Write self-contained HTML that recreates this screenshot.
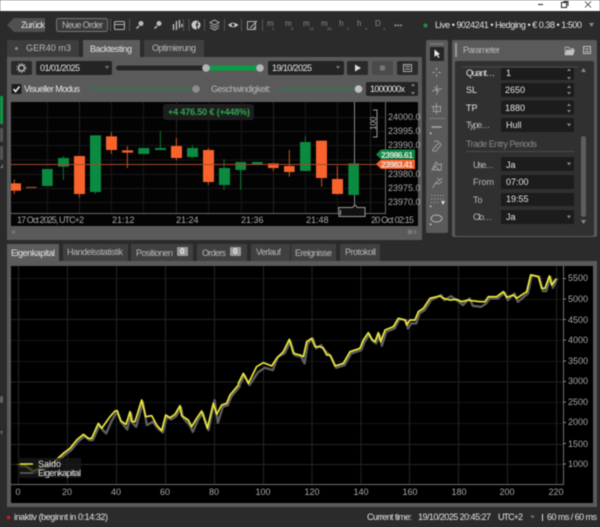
<!DOCTYPE html>
<html><head><meta charset="utf-8"><style>
html,body{margin:0;padding:0;background:#2b2b2b;width:600px;height:527px;overflow:hidden}
svg{display:block;filter:blur(.45px)}
text{font-family:"Liberation Sans",sans-serif;font-size:9px;fill:#c8c8c8}
.s{fill:#b8b8b8}.d{fill:#8a8a8a}.w{fill:#e4e4e4}
.ax{font-size:9px;fill:#a8a8a8}
.sub{font-size:4px;fill:#888}
.ic{fill:none;stroke:#b0b0b0;stroke-width:1}
.tb{fill:none;stroke:#9c9c9c;stroke-width:1}
</style></head><body>
<svg width="600" height="527" viewBox="0 0 600 527" xmlns="http://www.w3.org/2000/svg">
<rect width="600" height="527" fill="#2b2b2b"/>
<rect width="600" height="11" fill="#fff"/>
<path d="M538 4.500h5" stroke="#222" stroke-width="1"/>
<rect x="561.500" y="2.500" width="5" height="5" fill="none" stroke="#222"/><path d="M563.500 1.500h4.500v4.500" fill="none" stroke="#222"/>
<path d="M585 1.500l6 6M591 1.500l-6 6" stroke="#333" stroke-width=".8"/>

<!-- top toolbar -->
<polygon points="7,25 14,18 45,18 45,32 14,32" fill="#505050"/>
<text x="21" y="28" class="w" textLength="24">Zurück</text>
<rect x="56.500" y="18.500" width="51" height="13" rx="2" fill="#3a3a3a" stroke="#777"/>
<text x="62" y="28" class="s" textLength="41">Neue Order</text>
<g stroke="#555"><path d="M110.500 19v12M129.500 19v12M183.500 19v12M189 19v12M204.500 19v12M224.500 19v12M241.500 19v12M262.500 19v12"/></g>
<rect x="114.500" y="21.500" width="10" height="8" rx="1" class="ic"/><path d="M115 24.500h9" class="ic"/>
<circle cx="141" cy="23.500" r="2.500" fill="#bbb"/><path d="M139 26l-2.500 2.500" stroke="#bbb" stroke-width="1.500"/>
<circle cx="159" cy="23.500" r="2.500" fill="#bbb"/><path d="M157 26l-2.500 2.500" stroke="#bbb" stroke-width="1.500"/>
<path d="M173.500 24v6M176.500 21v9M179.500 20v8M182 24v3" stroke="#b5b5b5" stroke-width="1.500"/>
<circle cx="196" cy="25" r="4.500" fill="#c8c8c8"/><path d="M197 30v-5.500h1.500M195.500 25h3M196.800 24.500v-1.200q0-1 1.500-1" stroke="#2b2b2b" fill="none" stroke-width="1"/>
<path d="M210 22.500l4.500-2.500 4.500 2.500-4.500 2.500zM210 25l4.500 2.500 4.500-2.500M210 27.500l4.500 2.500 4.500-2.500" class="ic"/>
<path d="M228 25q5-4.500 10.500 0q-5.500 4.500-10.500 0z" fill="#c8c8c8"/><circle cx="233" cy="25" r="1.500" fill="#2b2b2b"/>
<rect x="247.500" y="21.500" width="8" height="8" class="ic"/><path d="M250 28l7-7M253 29l3-3" class="ic"/>
<text x="267" y="26" style="font-size:8px" class="d">m</text><text x="272" y="30" class="sub">1</text>
<text x="285" y="26" style="font-size:8px" class="d">m</text><text x="291" y="30" class="sub">5</text>
<text x="303" y="26" style="font-size:8px" class="d">m</text><text x="309" y="30" class="sub">15</text>
<text x="321" y="26" style="font-size:8px" class="d">m</text><text x="327" y="30" class="sub">30</text>
<text x="339" y="26" style="font-size:8px" class="d">h</text><text x="347" y="30" class="sub">1</text>
<text x="357" y="26" style="font-size:8px" class="d">h</text><text x="365" y="30" class="sub">4</text>
<text x="375" y="26" style="font-size:8px" class="d">D</text><text x="383" y="30" class="sub">1</text>
<text x="394" y="28" style="font-size:8px" class="d">•••</text>
<circle cx="425.500" cy="25.500" r="2" fill="#1e8f3e"/>
<text x="435" y="28" class="w" textLength="147">Live • 9024241 • Hedging • € 0.38 • 1:500</text>
<path d="M589 23h5l-2.500 4z" fill="#888"/>

<!-- backtest tabs -->
<rect x="7" y="40" width="72" height="18" fill="#3d3d3d"/>
<rect x="83" y="40" width="57" height="18" fill="#5c5c5c"/>
<rect x="144" y="40" width="60" height="18" fill="#404040"/>
<circle cx="16.500" cy="48.500" r="1.500" fill="#888"/>
<text x="26" y="51" class="s" textLength="45">GER40  m3</text>
<text x="90" y="52" class="w" textLength="42">Backtesting</text>
<text x="152" y="51" class="s" textLength="44">Optimierung</text>

<!-- main panel -->
<rect x="7" y="57" width="415" height="183" fill="#5a5a5a"/>
<rect x="11" y="61" width="21" height="14" rx="2" fill="#2a2a2a"/>
<circle cx="21.500" cy="68" r="3" fill="none" stroke="#bbb" stroke-width="1.500"/><circle cx="21.500" cy="68" r="4.500" fill="none" stroke="#999" stroke-dasharray="1.500 1.500"/>
<rect x="36" y="61" width="76" height="14" rx="2" fill="#242424"/><text x="40" y="71" class="w" textLength="40">01/01/2025</text>
<path d="M105 66h4l-2 3z" fill="#777"/>
<rect x="116" y="65.500" width="145" height="5" rx="2.500" fill="#262626"/>
<rect x="206" y="65.500" width="54" height="5" fill="#0b9c45"/>
<circle cx="206" cy="68" r="3.800" fill="#b5b5b5"/><circle cx="260" cy="68" r="3.800" fill="#b5b5b5"/>
<rect x="268" y="61" width="76" height="14" rx="2" fill="#242424"/><text x="272" y="71" class="w" textLength="40">19/10/2025</text>
<path d="M336 66h4l-2 3z" fill="#777"/>
<rect x="347" y="61" width="21" height="14" rx="2" fill="#2a2a2a"/><path d="M355 64.500l6 3.500-6 3.500z" fill="#ddd"/>
<rect x="372" y="61" width="21" height="14" rx="2" fill="#4a4a4a"/><rect x="380" y="65.500" width="5" height="5" fill="#777"/>
<rect x="397" y="61" width="21" height="14" rx="2" fill="#2a2a2a"/><rect x="403.500" y="64.500" width="8" height="7" class="ic"/><path d="M405 66.500h5M405 69h5" class="ic"/>
<rect x="11.500" y="84" width="10" height="10" rx="1.500" fill="#1c1c1c"/><path d="M13.500 89l2 2.500 4-5" stroke="#eee" stroke-width="1.500" fill="none"/>
<text x="24" y="92" class="w" textLength="56">Visueller Modus</text>
<rect x="91" y="88.500" width="104" height="1.500" fill="#1f8048"/><circle cx="196" cy="89" r="3.800" fill="#8c8c8c"/>
<text x="211" y="92" class="s" textLength="60">Geschwindigkeit:</text>
<rect x="280" y="88.500" width="78" height="1.500" fill="#1f8048"/><circle cx="358.500" cy="89" r="3.800" fill="#c0c0c0"/>
<rect x="366" y="82" width="52" height="14" rx="2" fill="#242424"/><text x="370" y="92" class="w" textLength="35">1000000x</text>
<path d="M411 86l2-2.500 2 2.500zM411 92l2 2.500 2-2.500z" fill="#888"/>

<!-- candle chart -->
<rect x="11" y="102" width="407" height="124" fill="#030303"/>
<g stroke="#171717"><path d="M11 117.500H385M11 131.500H385M11 145.500H385M11 160H385M11 174.500H385M11 188.500H385M11 202.500H385"/><path d="M47.500 102V213M79.500 102V213M111.500 102V213M143.500 102V213M176.500 102V213M208.500 102V213M241.500 102V213M273.500 102V213M305.500 102V213M337.500 102V213M370.500 102V213"/></g>
<g stroke="#242424"><path d="M79.500 102V213M176.500 102V213M273.500 102V213M370.500 102V213"/></g>
<path d="M385.500 102V213.500H11" stroke="#6a6a6a" fill="none"/>
<path d="M354.500 102V205" stroke="#888"/>
<g transform="scale(.33333) translate(0,300)" stroke-width="3">
<g stroke="#f7632a" fill="#f7632a">
<path d="M43 238V282M238 168V292M334 96V162M382 138V204M529 114V180M625 144V255" fill="none" stroke-width="2.500"/>
<rect x="33" y="250" width="30" height="22" stroke="none"/><rect x="78" y="261" width="32" height="2.500" stroke="none"/><rect x="222" y="168" width="33" height="114" stroke="none"/><rect x="318" y="109" width="33" height="41" stroke="none"/><rect x="366" y="151" width="33" height="7" stroke="none"/><rect x="513" y="138" width="33" height="36" stroke="none"/><rect x="609" y="150" width="33" height="96" stroke="none"/>
</g>
<g stroke="#0b8a42" fill="#0b8a42">
<path d="M190 168V240M286 106V282M481 93V150M577 135V175M672 178V270" fill="none" stroke-width="2.500"/>
<rect x="126" y="207" width="32" height="51" stroke="none"/><rect x="174" y="174" width="33" height="26" stroke="none"/><rect x="270" y="106" width="33" height="170" stroke="none"/><rect x="415" y="144" width="33" height="18" stroke="none"/><rect x="465" y="144" width="33" height="6" stroke="none"/><rect x="561" y="144" width="33" height="27" stroke="none"/><rect x="657" y="204" width="33" height="51" stroke="none"/>
</g>
<g transform="translate(660,0)">
<g stroke="#0b8a42" fill="#0b8a42"><path d="M62 186V270M256 108V213" fill="none" stroke-width="2.500"/>
<rect x="46" y="186" width="32" height="24" stroke="none"/><rect x="96" y="186" width="32" height="6" stroke="none"/><rect x="240" y="126" width="32" height="87" stroke="none"/></g>
<g stroke="#f7632a" fill="#f7632a"><path d="M160 190V212M208 150V230M305 122V260M352 198V284" fill="none" stroke-width="2.500"/>
<rect x="144" y="190" width="32" height="14" stroke="none"/><rect x="192" y="198" width="32" height="18" stroke="none"/><rect x="288" y="122" width="33" height="112" stroke="none"/><rect x="336" y="237" width="33" height="45" stroke="none"/></g>
<rect x="385" y="190" width="32" height="95" fill="#0b8a42" stroke="none"/>
</g></g>
<path d="M11 164.500H377" stroke="#a4482a" stroke-width="1"/>
<path d="M338.500 207.500h14l2.500-2.500 2.500 2.500h7.500v9h-26z" fill="#111" stroke="#999"/>
<rect x="340" y="210" width="1" height="5" fill="#aaa"/>
<path d="M373 110h4v27h-4" fill="none" stroke="#999"/>
<text transform="translate(376,130) rotate(-90)" style="font-size:8px" class="s">100</text>
<text x="388" y="120" class="ax">24000.0</text><text x="388" y="134" class="ax">23995.0</text><text x="388" y="148" class="ax">23990.0</text><text x="388" y="177" class="ax">23980.0</text><text x="388" y="191" class="ax">23975.0</text><text x="388" y="205" class="ax">23970.0</text>
<polygon points="376,154.500 381,149.500 415,149.500 415,159 381,159" fill="#0b8a42"/>
<text x="381" y="158" class="w" style="font-weight:bold;font-size:8.500px" textLength="32">23986.61</text>
<polygon points="376,164 381,159.500 415,159.500 415,169 381,169" fill="#f7632a"/>
<text x="381" y="167.500" class="w" style="font-weight:bold;font-size:8.500px" textLength="32">23983.41</text>
<text x="17" y="223" class="ax" textLength="67">17 Oct 2025, UTC+2</text>
<text x="112" y="223" class="ax">21:12</text><text x="176" y="223" class="ax">21:24</text><text x="241" y="223" class="ax">21:36</text><text x="306" y="223" class="ax">21:48</text>
<text x="371" y="223" class="ax" textLength="43">20 Oct 02:15</text>
<rect x="163" y="104" width="91" height="16" rx="3" fill="#1d1d1d"/>
<text x="168" y="115" style="font-size:9px;font-weight:bold;fill:#2fa650" textLength="82">+4 476.50 € (+448%)</text>
<path d="M11 232l4-2.500v5z" fill="#777"/>
<circle cx="410" cy="232" r="2.500" fill="#777"/><path d="M414 229.500l3 2.500-3 2.500z" fill="#777"/>

<!-- left strip -->
<rect x="0" y="96" width="3" height="28" fill="#0b9c45"/>
<rect x="0" y="128" width="3" height="14" rx="1" fill="#555"/><rect x="0" y="146" width="3" height="14" rx="1" fill="#555"/>
<path d="M0 168l3-4v4z" fill="#777"/>
<rect x="0" y="396" width="3" height="7" rx="1.500" fill="#666"/><path d="M0 431h3l-1.500 4z" fill="#666"/>

<!-- drawing toolbar -->
<rect x="426" y="40" width="22" height="193" rx="2" fill="#5a5a5a"/>
<path d="M430 44h14" stroke="#888" stroke-dasharray="1 1" stroke-width="2"/>
<rect x="430" y="47" width="14" height="14" rx="1" fill="#262626"/><path d="M434.500 49.500v7.500l2-2 2 3 1-.6-1.800-3h2.500z" fill="#eee"/>
<path d="M436.500 67.500v3M436.500 74v3M432 72.500h3M438 72.500h3" class="tb"/>
<path d="M437 85v10M432 91l10-2.500M434 87l5 5" class="tb"/>
<path d="M436.500 103v11M431.500 106.500h10M433.500 106.500v5h7v-5M433.500 111.500h7" class="tb"/>
<path d="M429 118.500h16" stroke="#7a7a7a"/>
<path d="M431.500 127h10" stroke="#a8a8a8" stroke-width="1.500"/><path d="M430 132l2 2h-2z" fill="#eee"/>
<path d="M432.500 150l5-6q3-2 3.500 1l-5 6q-3 1-3.500-1zM434 142q3-2 5 0" class="tb"/>
<path d="M432 170l4-8 2.500 3 3-1-.5 6zM435 166l5 5M433.500 169l3-4" class="tb"/>
<path d="M432.500 188l3-5M435.500 183l7-5M435.500 183l3.500 1 3.500-3M437 178l3 2" class="tb"/>
<path d="M431 195.500h13M431 199h13M431 202.500h9" stroke="#999" stroke-dasharray="1.500 1.500"/><path d="M430 205l2 2h-2zM441 201h4l-2 4z" fill="#ddd"/>
<ellipse cx="436.500" cy="218.500" rx="5.500" ry="3.500" class="ic"/><path d="M430 223l2 2h-2z" fill="#eee"/>

<!-- parameter panel -->
<rect x="452" y="40" width="145" height="197" rx="2" fill="#5a5a5a"/>
<rect x="455" y="43" width="2" height="14" fill="#9a9a9a"/>
<text x="463" y="53" class="s" style="font-size:9px" textLength="37">Parameter</text>
<path d="M565.500 47h3l1 1.500h4v1.500M565 55v-8l.5 0M565 55l1.500-5h8l-1.500 5z" fill="#c0c0c0" stroke="#c0c0c0" stroke-width=".6"/>
<rect x="583.500" y="46.500" width="7" height="7" fill="#5a5a5a" stroke="#c0c0c0"/><path d="M585 49h4M585 51.500h4" stroke="#c0c0c0"/>
<rect x="455" y="61" width="139" height="175" rx="2" fill="#303030"/>
<path d="M462 67h116" stroke="#4a4a4a"/>
<g fill="#1c1c1c">
<rect x="501" y="68" width="73" height="12" rx="1"/><rect x="501" y="83" width="73" height="14" rx="1"/><rect x="501" y="100.500" width="73" height="14" rx="1"/><rect x="501" y="118" width="73" height="14" rx="1"/><rect x="501" y="157" width="73" height="14" rx="1"/><rect x="501" y="175" width="73" height="14" rx="1"/><rect x="501" y="193" width="73" height="13" rx="1"/><rect x="501" y="210" width="73" height="14" rx="1"/>
</g>
<text x="466" y="76" class="w" textLength="29">Quant…</text><text x="466" y="93" class="w">SL</text><text x="466" y="111" class="w">TP</text><text x="466" y="128" class="s" textLength="24">Type…</text>
<text x="473" y="168" class="s" textLength="21">Use…</text><text x="473" y="185" class="s">From</text><text x="473" y="203" class="s">To</text><text x="473" y="220" class="s" textLength="19">Clo…</text>
<text x="506" y="76" class="w">1</text><text x="505" y="93" class="w">2650</text><text x="505" y="111" class="w">1880</text><text x="506" y="128" class="w">Hull</text>
<text x="506" y="168" class="w">Ja</text><text x="506" y="185" class="w">07:00</text><text x="506" y="202" class="w">19:55</text><text x="506" y="220" class="w">Ja</text>
<text x="466" y="147" class="d" textLength="71">Trade Entry Periods</text>
<path d="M466 151.500h108" stroke="#4a4a4a"/>
<g fill="#888">
<path d="M567 71l2-2.500 2 2.500zM567 77l2 2.500 2-2.500zM567 88l2-2.500 2 2.500zM567 92l2 2.500 2-2.500zM567 106l2-2.500 2 2.500zM567 110l2 2.500 2-2.500z"/>
<path d="M567 123.500h4l-2 3zM567 162.500h4l-2 3zM567 215.500h4l-2 3z"/>
<path d="M581 72l2.500-4 2.500 4zM581 220l2.500 4 2.500-4z"/>
</g>
<rect x="581" y="136" width="5" height="81" rx="2.500" fill="#5e5e5e"/>

<!-- bottom tabs -->
<rect x="7" y="244" width="52" height="18" fill="#5c5c5c"/>
<g fill="#404040"><rect x="63" y="244" width="65" height="17"/><rect x="131" y="244" width="62" height="17"/><rect x="197" y="244" width="50" height="17"/><rect x="251" y="244" width="39" height="17"/><rect x="291" y="244" width="45" height="17"/><rect x="340" y="244" width="40" height="17"/></g>
<text x="11" y="256" class="w" textLength="44">Eigenkapital</text>
<text x="67" y="255" class="s" textLength="56">Handelsstatistik</text>
<text x="136" y="256" class="s" textLength="37">Positionen</text>
<rect x="177" y="247" width="11" height="9" rx="1" fill="#9a9a9a"/><text x="180" y="254" style="font-size:8px;fill:#eee;font-weight:bold">0</text>
<text x="202" y="256" class="s" textLength="24">Orders</text>
<rect x="230" y="247" width="11" height="9" rx="1" fill="#9a9a9a"/><text x="233" y="254" style="font-size:8px;fill:#eee;font-weight:bold">0</text>
<text x="256" y="255" class="s" textLength="25">Verlauf</text>
<text x="295" y="256" class="s" textLength="37">Ereignisse</text>
<text x="345" y="255" class="s" textLength="31">Protokoll</text>

<!-- equity panel -->
<rect x="7" y="261" width="590" height="246" fill="#5a5a5a"/>
<rect x="11" y="266" width="582" height="237" fill="#000"/>
<g stroke="#141414"><path d="M11 278.500H563M11 299.500H563M11 340.500H563M11 361.500H563M11 402.500H563M11 423.500H563"/></g>
<g stroke="#242424"><path d="M11 319.500H563M11 382H563M11 444.500H563M11 464.500H563"/>
<path d="M18.500 266V484M67.500 266V484M116.500 266V484M165.500 266V484M214.500 266V484M263.500 266V484M312 266V484M361 266V484M409.500 266V484M458.500 266V484M507.500 266V484M556.500 266V484"/></g>
<path d="M563.500 266V484.500H11" stroke="#6e6e6e" fill="none"/>
<g stroke="#888"><path d="M563 278.500h3M563 299h3M563 319.500h3M563 340h3M563 361h3M563 381.500h3M563 402h3M563 422.500h3M563 443.500h3M563 464h3"/></g>
<g fill="none" stroke-linejoin="round" stroke-linecap="round">
<!-- equity shadow -->
<g stroke="#5f5f5f" stroke-width="7" transform="translate(1.200,1.800) scale(.33333)">
<polyline transform="translate(0,1155)" points="55,238 75,240 100,258 130,245 160,232 190,205 210,190 230,165 250,148 265,160 275,160 295,115 305,130 315,140 330,105 345,78 352,85 362,108 378,128 390,80 395,110 405,120 425,45 437,115 455,105 470,125 485,137 497,90 510,98 525,88 540,62 545,92 565,115 575,135 590,100 605,78 622,130 640,40 650,108 665,60 680,55 690,30 715,0"/>
<polyline transform="translate(0,720)" points="715,430 730,400 745,430 770,392 790,378 815,385 830,345 850,335 868,298 880,340 900,345"/>
<polyline transform="translate(900,720)" points="0,345 10,365 20,305 35,290 45,320 60,310 70,325 80,335 90,345 105,378 130,370 150,335 180,325 190,300 205,278 215,298 225,305 235,278 242,312 255,270 280,260 295,232 315,235 320,260 330,245 345,245 355,215 370,205 390,175 420,160 430,175 450,163 470,178 485,190 505,170 515,192 540,195 555,185 565,170 590,170 610,152 620,175 640,155 650,180 680,155 692,100 715,105 725,148 735,148 748,105 755,138 767,112"/>
</g>
<g stroke="#eeea38" stroke-width="5" transform="scale(.33333)">
<polyline transform="translate(0,1155)" points="55,238 75,240 100,258 130,245 160,232 190,205 210,190 230,165 250,148 265,160 275,160 295,115 305,130 330,95 345,78 352,77 362,108 378,118 390,80 395,110 405,110 425,45 437,95 455,92 470,120 485,137 497,90 510,98 525,88 540,62 545,92 565,105 575,125 590,100 605,78 622,130 640,55 650,88 665,60 680,55 690,30 715,0"/>
<polyline transform="translate(0,720)" points="715,430 730,400 745,430 770,380 790,368 815,378 830,355 850,335 868,298 880,340 900,345"/>
<polyline transform="translate(900,720)" points="0,345 10,350 20,305 35,295 45,320 60,320 70,325 80,345 90,345 105,378 130,370 150,335 180,325 190,300 205,278 215,298 225,305 235,278 242,305 255,270 280,260 295,235 315,240 320,255 330,240 345,240 355,215 370,205 390,175 420,168 430,175 450,180 470,178 485,185 505,180 515,182 540,185 555,185 565,170 590,170 610,155 620,172 640,165 650,175 680,155 692,105 715,110 725,145 735,145 748,108 755,135 767,118"/>
</g>
</g>
<rect x="18" y="458" width="63" height="20" fill="#1a1a1a" fill-opacity=".75"/>
<path d="M20 464h13" stroke="#eeea38" stroke-width="1.500"/><path d="M20 473h13" stroke="#666" stroke-width="1.500"/>
<text x="38" y="467" class="w">Saldo</text><text x="38" y="476" class="w" textLength="43">Eigenkapital</text>
<text x="568" y="281" class="ax">5500</text><text x="568" y="302" class="ax">5000</text><text x="568" y="323" class="ax">4500</text><text x="568" y="343" class="ax">4000</text><text x="568" y="364" class="ax">3500</text><text x="568" y="384" class="ax">3000</text><text x="568" y="405" class="ax">2500</text><text x="568" y="425" class="ax">2000</text><text x="568" y="447" class="ax">1500</text><text x="568" y="467" class="ax">1000</text>
<text x="18" y="495" class="ax" text-anchor="middle">0</text><text x="67" y="495" class="ax" text-anchor="middle">20</text><text x="116" y="495" class="ax" text-anchor="middle">40</text><text x="165" y="495" class="ax" text-anchor="middle">60</text><text x="214" y="495" class="ax" text-anchor="middle">80</text><text x="263" y="495" class="ax" text-anchor="middle">100</text><text x="312" y="495" class="ax" text-anchor="middle">120</text><text x="361" y="495" class="ax" text-anchor="middle">140</text><text x="410" y="495" class="ax" text-anchor="middle">160</text><text x="459" y="495" class="ax" text-anchor="middle">180</text><text x="507" y="495" class="ax" text-anchor="middle">200</text><text x="556" y="495" class="ax" text-anchor="middle">220</text>

<!-- status bar -->
<rect x="7" y="516" width="3" height="3" fill="#d11d1d"/>
<text x="14" y="520" class="w" textLength="94">inaktiv (beginnt in 0:14:32)</text>
<text x="367" y="520" class="w" textLength="45">Current time:</text>
<text x="418" y="520" class="w" textLength="73">19/10/2025 20:45:27</text>
<text x="498" y="520" class="w" textLength="25">UTC+2</text>
<path d="M530.500 515.500h4l-2 3z" fill="#777"/>
<path d="M542.500 514v7" stroke="#ddd"/>
<text x="547" y="520" class="w" textLength="50">60 ms / 60 ms</text>
</svg>
</body></html>
